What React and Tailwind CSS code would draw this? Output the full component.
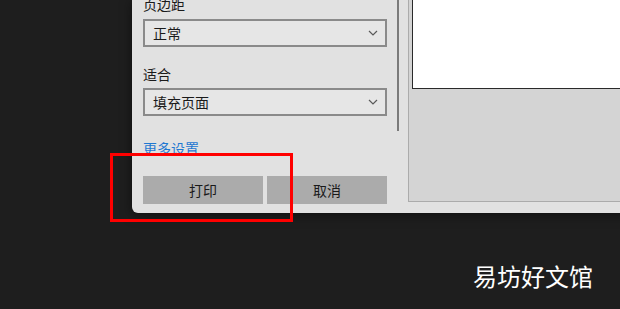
import React from "react";

const Chevron = () => (
  <svg width="10" height="6" viewBox="0 0 10 6" className="text-[#5a5a5a]">
    <polyline points="1,1 5,5 9,1" fill="none" stroke="currentColor" strokeWidth="1.2" />
  </svg>
);

const Select = ({ value }) => (
  <div className="h-[28px] w-[244px] border-2 border-[#8a8a8a] bg-[#e6e6e6] flex items-center justify-between pl-[8px] pr-[7px] text-[14px] text-[#1a1a1a]">
    <span>{value}</span>
    <Chevron />
  </div>
);

const App = () => {
  return (
    <div
      className="relative w-[620px] h-[309px] bg-[#1e1e1e] overflow-hidden"
      style={{ fontFamily: '"Noto Sans CJK SC", "Noto Sans", sans-serif' }}
    >
      {/* Print dialog */}
      <div className="ml-[132px] w-[500px] h-[213px] bg-[#e1e1e1] rounded-bl-[6px] flex shadow-[0_2px_12px_rgba(0,0,0,0.5)]">
        {/* Settings column */}
        <div className="relative w-[276px] pl-[11px] flex flex-col">
          <div className="-mt-[6px] h-[20px] leading-[20px] text-[14px] text-[#1a1a1a]">页边距</div>
          <div className="mt-[5px]">
            <Select value="正常" />
          </div>
          <div className="mt-[17px] h-[20px] leading-[20px] text-[14px] text-[#1a1a1a]">适合</div>
          <div className="mt-[4px]">
            <Select value="填充页面" />
          </div>
          <div className="mt-[22px] h-[20px] leading-[20px] text-[14px] text-[#1f78d1]">更多设置</div>
          <div className="mt-[18px] flex gap-[4px]">
            <div className="w-[120px] h-[28px] bg-[#ababab] flex items-center justify-center text-[14px] text-[#1a1a1a]">打印</div>
            <div className="w-[120px] h-[28px] bg-[#ababab] flex items-center justify-center text-[14px] text-[#1a1a1a]">取消</div>
          </div>
          {/* scrollbar thumb */}
          <div className="absolute left-[265px] top-0 w-[2px] h-[131px] bg-[#7a7a7a]" />
        </div>
        {/* Preview column */}
        <div className="w-[224px] h-[202px] bg-[#d4d4d4] border-l border-b border-[#ababab] pl-[3px]">
          <div className="h-[89px] bg-white border-l border-b border-[#2a2a2a]" />
        </div>
      </div>

      {/* annotation */}
      <div className="absolute left-[110px] top-[153px] w-[183px] h-[69px] border-[3px] border-[#ff0000]" />

      {/* watermark */}
      <div className="absolute left-[473px] top-[262px] text-[24px] leading-[28px] text-white">易坊好文馆</div>
    </div>
  );
};

export default App;
